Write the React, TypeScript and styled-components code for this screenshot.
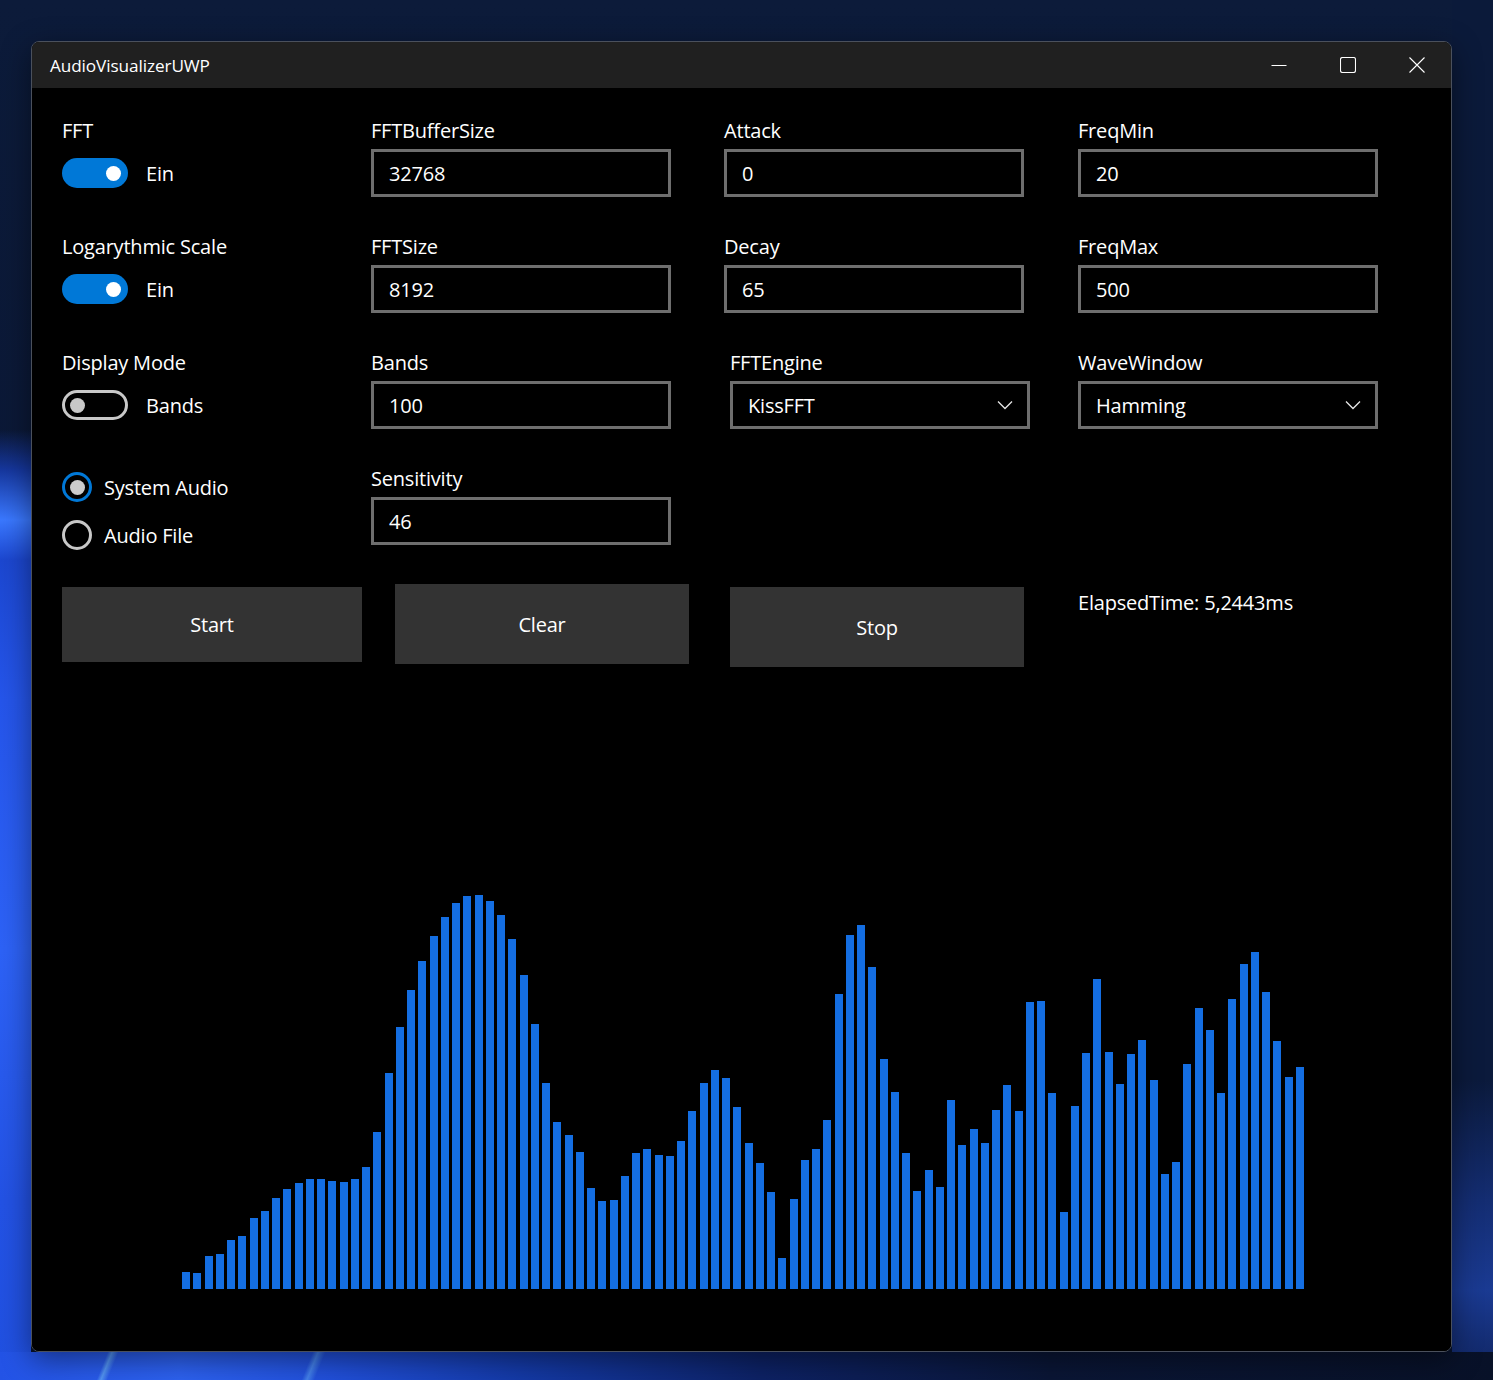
import React from "react";
import styled, { createGlobalStyle } from "styled-components";

const FONT = `"Open Sans", "Noto Sans", "Liberation Sans", sans-serif`;

const GlobalStyle = createGlobalStyle`
  html, body {
    margin: 0;
    padding: 0;
    width: 1493px;
    height: 1380px;
    overflow: hidden;
  }
  body {
    font-family: ${FONT};
    color: #ffffff;
    background-color: #0a1733;
    background-repeat: no-repeat;
    background-image:
      linear-gradient(112deg, rgba(0,0,0,0) 0 100px, rgba(120,200,255,0.55) 104px, rgba(0,0,0,0) 110px, rgba(0,0,0,0) 290px, rgba(110,190,255,0.45) 295px, rgba(0,0,0,0) 302px),
      linear-gradient(90deg, #2353e6 0px, #2d62f2 180px, #2150dc 330px, #143aa8 520px, #0d2266 760px, #0a1636 1050px, #081128 1493px),
      linear-gradient(180deg, rgba(0,0,0,0) 0px, rgba(0,0,0,0) 430px, #16379e 470px, #3a78ff 520px, #1c47d0 560px, #2555ea 700px, #2d62f6 950px, #2352e4 1200px, #2050e0 1380px),
      linear-gradient(180deg, #0b1a3a 0px, #0b1a3c 1080px, #142d72 1200px, #1a3a92 1290px, #10245e 1380px),
      linear-gradient(180deg, #0c1b3a 0%, #0b1836 40%, #0a1530 70%, #08122a 100%);
    background-size:
      420px 28px,
      1493px 28px,
      31px 1380px,
      41px 1380px,
      1493px 1380px;
    background-position:
      0 1352px,
      0 1352px,
      0 0,
      1452px 0,
      0 0;
  }
  #root { width: 1493px; height: 1380px; }
`;

const Page = styled.div`
  width: 1493px;
  height: 1380px;
  padding: 41px 0 0 31px;
  box-sizing: border-box;
`;

const Window = styled.div`
  width: 1421px;
  height: 1311px;
  box-sizing: border-box;
  border: 1px solid #4a505c;
  border-radius: 8px;
  overflow: hidden;
  display: flex;
  flex-direction: column;
  background: #000;
  box-shadow: 0 8px 30px rgba(0, 0, 0, 0.45);
`;

const TitleBar = styled.div`
  height: 46px;
  flex: 0 0 46px;
  background: #202020;
  display: flex;
  align-items: center;
`;

const Title = styled.div`
  flex: 1;
  padding-left: 18px;
  font-size: 17.2px;
  color: #ffffff;
  letter-spacing: -0.1px;
`;

const CaptionButton = styled.div`
  width: 69px;
  height: 46px;
  display: flex;
  align-items: center;
  justify-content: center;
`;

const Content = styled.div`
  flex: 1;
  display: flex;
  flex-direction: column;
  background: #000;
  letter-spacing: -0.2px;
`;

const Controls = styled.div`
  display: grid;
  grid-template-columns: 309px 353px 354px 1fr;
  row-gap: 36px;
  padding: 29px 0 0 30px;
  align-items: start;
`;

const Field = styled.div<{ $dx?: number }>`
  display: flex;
  flex-direction: column;
  gap: 4px;
  margin-left: ${(p) => p.$dx ?? 0}px;
`;

const ToggleField = styled.div`
  display: flex;
  flex-direction: column;
  gap: 13px;
`;

const Label = styled.div`
  font-size: 20px;
  line-height: 28px;
  height: 28px;
  color: #ffffff;
  white-space: nowrap;
`;

const Box = styled.div`
  width: 300px;
  height: 48px;
  box-sizing: border-box;
  border: 3px solid #6e6e6e;
  background: #000;
  padding: 0 14px 0 15px;
  display: flex;
  align-items: center;
  justify-content: space-between;
  font-size: 20px;
  color: #ffffff;
`;

const ToggleRow = styled.div`
  display: flex;
  align-items: center;
  gap: 18px;
  height: 30px;
`;

const Track = styled.div<{ $on: boolean }>`
  width: 66px;
  height: 30px;
  box-sizing: border-box;
  border-radius: 15px;
  display: flex;
  align-items: center;
  background: ${(p) => (p.$on ? "#0078d7" : "transparent")};
  border: ${(p) => (p.$on ? "none" : "3px solid #c8c8c8")};
  justify-content: ${(p) => (p.$on ? "flex-end" : "flex-start")};
  padding: ${(p) => (p.$on ? "0 7px" : "0 5px")};
`;

const Knob = styled.div<{ $on: boolean }>`
  width: 15px;
  height: 15px;
  border-radius: 50%;
  background: ${(p) => (p.$on ? "#ffffff" : "#c8c8c8")};
`;

const StateText = styled.span`
  font-size: 20px;
  color: #ffffff;
`;

const RadioGroup = styled.div`
  display: flex;
  flex-direction: column;
  gap: 18px;
  padding-top: 7px;
`;

const RadioRow = styled.div`
  display: flex;
  align-items: center;
  gap: 12px;
  height: 30px;
`;

const RadioCircle = styled.div<{ $checked: boolean }>`
  width: 30px;
  height: 30px;
  box-sizing: border-box;
  border-radius: 50%;
  border: 3px solid ${(p) => (p.$checked ? "#0078d7" : "#c8c8c8")};
  display: flex;
  align-items: center;
  justify-content: center;
`;

const RadioDot = styled.div`
  width: 15px;
  height: 15px;
  border-radius: 50%;
  background: #cccccc;
`;

const ActionButton = styled.div<{ $w: number; $h: number; $dx: number; $dy: number }>`
  width: ${(p) => p.$w}px;
  height: ${(p) => p.$h}px;
  margin-left: ${(p) => p.$dx}px;
  margin-top: ${(p) => p.$dy}px;
  background: #333333;
  display: flex;
  align-items: center;
  justify-content: center;
  font-size: 20px;
  color: #ffffff;
`;

const Elapsed = styled.div`
  font-size: 20px;
  line-height: 28px;
  margin-top: 3px;
  white-space: nowrap;
`;

const ChartArea = styled.div`
  flex: 1;
  display: flex;
  align-items: flex-end;
  padding-bottom: 62px;
`;

const tops = [
  1272, 1273, 1256, 1254, 1240, 1236, 1218, 1211, 1198, 1189,
  1183, 1179, 1179, 1181, 1182, 1179, 1167, 1132, 1073, 1027,
  990, 961, 936, 917, 903, 896, 895, 901, 915, 939,
  975, 1024, 1083, 1122, 1135, 1152, 1188, 1201, 1200, 1176,
  1153, 1149, 1155, 1156, 1141, 1111, 1083, 1070, 1078, 1107,
  1143, 1163, 1192, 1258, 1199, 1160, 1149, 1120, 994, 935,
  925, 967, 1059, 1092, 1153, 1191, 1170, 1187, 1100, 1145,
  1129, 1143, 1110, 1085, 1111, 1002, 1001, 1093, 1212, 1106,
  1053, 979, 1052, 1084, 1054, 1040, 1080, 1174, 1162, 1064,
  1008, 1030, 1093, 999, 964, 952, 992, 1041, 1077, 1067,
];

const CHART_H = 400;
const BOTTOM = 1289;

function Spectrum() {
  return (
    <svg width={1419} height={CHART_H} viewBox={`0 0 1419 ${CHART_H}`} shapeRendering="crispEdges">
      {tops.map((t, i) => {
        const x = Math.round(182 + (i * 1114) / 99) - 32;
        const h = BOTTOM - t;
        return <rect key={i} x={x} y={CHART_H - h} width={8} height={h} fill="#146ee2" />;
      })}
    </svg>
  );
}

function Chevron() {
  return (
    <svg width="16" height="10" viewBox="0 0 16 10">
      <path d="M1 1.5 L8 8.5 L15 1.5" fill="none" stroke="#e6e6e6" strokeWidth="1.3" />
    </svg>
  );
}

function Toggle({ label, on, text }: { label: string; on: boolean; text: string }) {
  return (
    <ToggleField>
      <Label>{label}</Label>
      <ToggleRow>
        <Track $on={on}>
          <Knob $on={on} />
        </Track>
        <StateText>{text}</StateText>
      </ToggleRow>
    </ToggleField>
  );
}

function TextField({ label, value, dx }: { label: string; value: string; dx?: number }) {
  return (
    <Field $dx={dx}>
      <Label>{label}</Label>
      <Box>{value}</Box>
    </Field>
  );
}

function ComboField({ label, value, dx }: { label: string; value: string; dx?: number }) {
  return (
    <Field $dx={dx}>
      <Label>{label}</Label>
      <Box>
        <span>{value}</span>
        <Chevron />
      </Box>
    </Field>
  );
}

export default function App() {
  return (
    <>
      <GlobalStyle />
      <Page>
        <Window>
          <TitleBar>
            <Title>AudioVisualizerUWP</Title>
            <CaptionButton>
              <svg width="16" height="16" viewBox="0 0 16 16">
                <path d="M0.5 8.5 H15.5" stroke="#ffffff" strokeWidth="1" />
              </svg>
            </CaptionButton>
            <CaptionButton>
              <svg width="16" height="16" viewBox="0 0 16 16">
                <rect x="0.5" y="0.5" width="15" height="15" rx="2" fill="none" stroke="#ffffff" strokeWidth="1.1" />
              </svg>
            </CaptionButton>
            <CaptionButton>
              <svg width="16" height="16" viewBox="0 0 16 16">
                <path d="M0.5 0.5 L15.5 15.5 M15.5 0.5 L0.5 15.5" stroke="#ffffff" strokeWidth="1.1" />
              </svg>
            </CaptionButton>
          </TitleBar>
          <Content>
            <Controls>
              <Toggle label="FFT" on text="Ein" />
              <TextField label="FFTBufferSize" value="32768" />
              <TextField label="Attack" value="0" />
              <TextField label="FreqMin" value="20" />

              <Toggle label="Logarythmic Scale" on text="Ein" />
              <TextField label="FFTSize" value="8192" />
              <TextField label="Decay" value="65" />
              <TextField label="FreqMax" value="500" />

              <Toggle label="Display Mode" on={false} text="Bands" />
              <TextField label="Bands" value="100" />
              <ComboField label="FFTEngine" value="KissFFT" dx={6} />
              <ComboField label="WaveWindow" value="Hamming" />

              <RadioGroup>
                <RadioRow>
                  <RadioCircle $checked>
                    <RadioDot />
                  </RadioCircle>
                  <StateText>System Audio</StateText>
                </RadioRow>
                <RadioRow>
                  <RadioCircle $checked={false} />
                  <StateText>Audio File</StateText>
                </RadioRow>
              </RadioGroup>
              <TextField label="Sensitivity" value="46" />
              <div />
              <div />

              <ActionButton $w={300} $h={75} $dx={0} $dy={1}>Start</ActionButton>
              <ActionButton $w={294} $h={80} $dx={24} $dy={-2}>Clear</ActionButton>
              <ActionButton $w={294} $h={80} $dx={6} $dy={1}>Stop</ActionButton>
              <Elapsed>ElapsedTime: 5,2443ms</Elapsed>
            </Controls>
            <ChartArea>
              <Spectrum />
            </ChartArea>
          </Content>
        </Window>
      </Page>
    </>
  );
}
